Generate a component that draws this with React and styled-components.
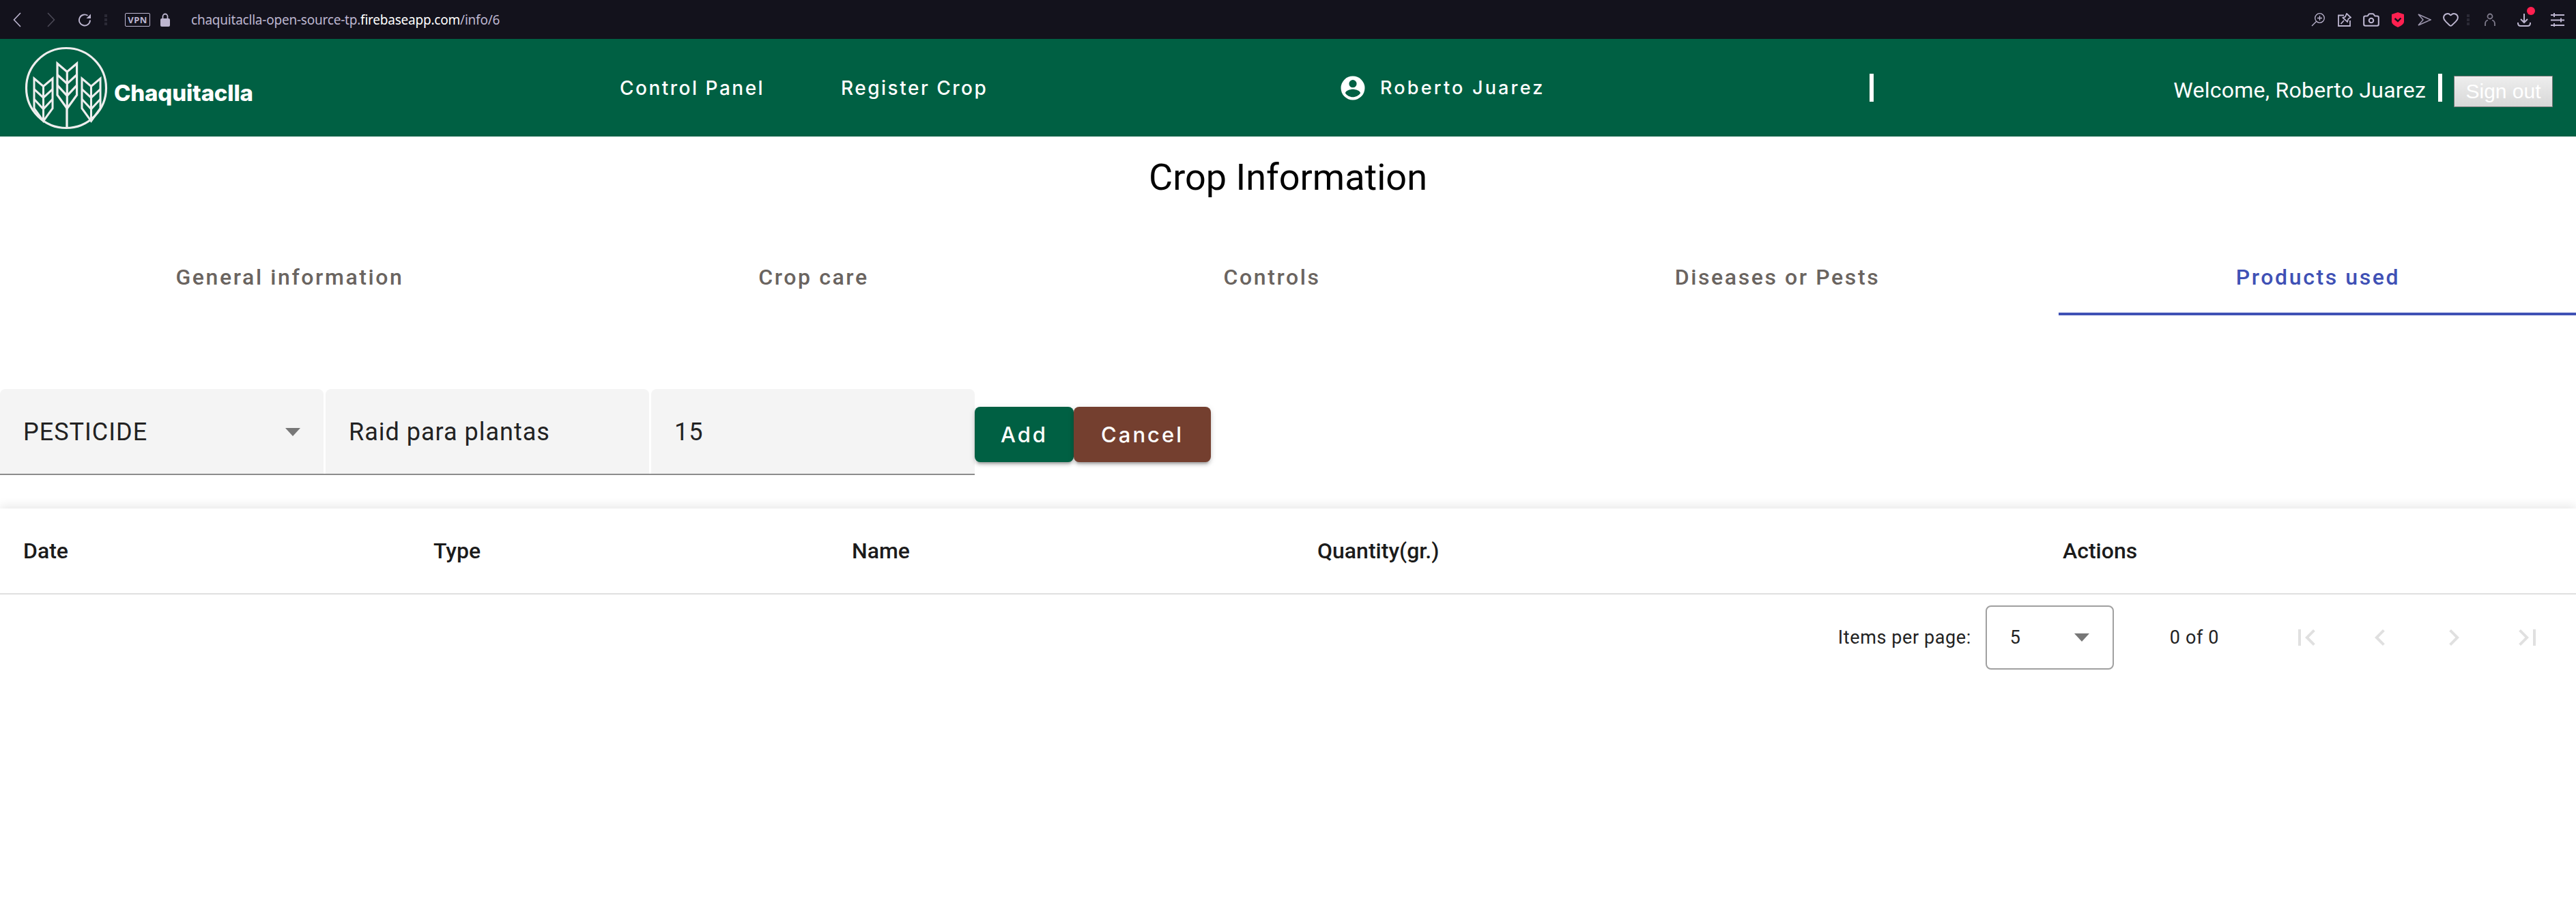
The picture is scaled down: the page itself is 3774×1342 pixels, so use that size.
import React from 'react';
import styled, { createGlobalStyle } from 'styled-components';
import { Camera, Heart } from 'lucide-react';

const GREEN = '#006043';
const BAR_TEXT = '#bdb6d0';

const Global = createGlobalStyle`
  html, body { margin: 0; padding: 0; background: #fff; }
  body { font-family: Roboto, "Liberation Sans", sans-serif; width: 3774px; height: 1342px; overflow: hidden; }
`;

const BrowserBar = styled.div`
  height: 57px;
  background: #13121c;
  display: flex;
  align-items: center;
  padding-left: 19px;
  color: ${BAR_TEXT};
`;

const Slot = styled.div`
  display: flex;
  margin-left: ${(p) => p.$ml || 0}px;
`;

const Dots = styled.div`
  width: 4px;
  height: 16px;
  margin-left: ${(p) => p.$ml || 0}px;
  background: repeating-linear-gradient(#2b2a36 0 4px, transparent 4px 6px);
`;

const Vpn = styled.span`
  width: 37px;
  height: 20px;
  margin-left: 26px;
  box-sizing: border-box;
  border: 1px solid ${BAR_TEXT};
  border-radius: 2px;
  display: flex;
  align-items: center;
  justify-content: center;
  font: 700 13px "Noto Sans", sans-serif;
  letter-spacing: 0.4px;
`;

const Url = styled.div`
  margin-left: 31px;
  font: 400 19px "Noto Sans", sans-serif;
  letter-spacing: -0.22px;
  color: ${BAR_TEXT};
  & b { color: #fff; font-weight: 400; }
`;

const BarIcons = styled.div`
  margin-left: auto;
  display: flex;
  align-items: center;
  padding-right: 1px;
`;

const IconCell = styled.div`
  width: ${(p) => p.$w || 39}px;
  display: flex;
  justify-content: center;
  position: relative;
`;

const Badge = styled.span`
  position: absolute;
  top: -9px;
  left: 27px;
  width: 12px;
  height: 12px;
  border-radius: 50%;
  background: #ff2050;
`;

const Header = styled.header`
  height: 143px;
  background: ${GREEN};
  display: flex;
  align-items: center;
  color: #fff;
  padding-left: 35px;
`;

const Brand = styled.div`
  display: flex;
  align-items: center;
  gap: 8px;
  width: 873px;
`;

const BrandName = styled.span`
  font: 800 33px Inter, "Noto Sans", sans-serif;
  letter-spacing: -0.2px;
  margin-top: 14px;
`;

const NavLink = styled.a`
  width: ${(p) => p.$w}px;
  font: 500 28px Inter, sans-serif;
  letter-spacing: 2.5px;
  color: #fff;
  white-space: nowrap;
`;

const UserBox = styled.div`
  display: flex;
  align-items: center;
  gap: 19px;
  width: 778px;
  font: 500 27px Inter, sans-serif;
  letter-spacing: 3.2px;
`;

const Divider = styled.div`
  width: 6px;
  height: 41px;
  background: #fff;
`;

const Right = styled.div`
  margin-left: auto;
  display: flex;
  align-items: center;
  padding-right: 34px;
`;

const Welcome = styled.span`
  font-size: 32px;
  letter-spacing: 0.25px;
  margin: 6px 18px 0 0;
  white-space: nowrap;
`;

const SignOut = styled.button`
  width: 145px;
  height: 46px;
  margin: 11px 0 0 17px;
  border: 1px solid #777;
  background: linear-gradient(#eee, #d8d8d8);
  color: #fff;
  font: 400 30px "Liberation Sans", sans-serif;
  padding: 0;
`;

const Title = styled.h1`
  margin: 0;
  font: 400 54px Roboto, sans-serif;
  text-align: center;
  line-height: 60px;
  padding-top: 30px;
  color: #000;
`;

const Tabs = styled.div`
  display: grid;
  grid-template-columns: 847px 688px 655px 826px 1fr;
  margin-top: 51px;
`;

const Tab = styled.div`
  display: flex;
  align-items: center;
  justify-content: center;
  font: 500 32px Roboto, sans-serif;
  letter-spacing: 2.6px;
  color: ${(p) => (p.$active ? '#3f51b5' : '#6a6460')};
  border-bottom: 4px solid ${(p) => (p.$active ? '#3f51b5' : 'transparent')};
  height: 121px;
  padding: 13px 0 0 2px;
  box-sizing: border-box;
`;

const FormRow = styled.div`
  display: flex;
  align-items: flex-start;
  margin-top: 108px;
`;

const FieldGroup = styled.div`
  display: flex;
  width: 1428px;
  gap: 3px;
  border-bottom: 2px solid #8c8c8c;
`;

const Field = styled.div`
  flex: 1;
  height: 124px;
  box-sizing: border-box;
  background: #f4f4f4;
  border-radius: 8px 8px 0 0;
  display: flex;
  align-items: center;
  justify-content: space-between;
  padding: 2px 34px 0;
  font-size: 36px;
  letter-spacing: 1px;
  color: #222;
`;

const Caret = styled.span`
  width: 0;
  height: 0;
  border-left: 11.5px solid transparent;
  border-right: 11.5px solid transparent;
  border-top: 12px solid #777;
`;

const Btn = styled.button`
  height: 81px;
  margin-top: 26px;
  padding: 0;
  width: ${(p) => p.$w}px;
  border: 0;
  border-radius: 8px;
  background: ${(p) => p.$bg};
  color: #fff;
  font: 500 31px Inter, sans-serif;
  letter-spacing: 3px;
  box-shadow: 0 6px 3px -4px rgba(0,0,0,.2), 0 4px 5px rgba(0,0,0,.14), 0 2px 10px rgba(0,0,0,.12);
`;

const Table = styled.div`
  margin-top: 49px;
  box-shadow: 0 -4px 14px rgba(0,0,0,.09);
  clip-path: inset(-30px 0 0 0);
`;

const HeadRow = styled.div`
  height: 126px;
  box-sizing: border-box;
  display: grid;
  grid-template-columns: 601px 613px 682px 1092px 1fr;
  align-items: center;
  padding-left: 34px;
  border-bottom: 2px solid #e0e0e0;
  font: 500 32px Roboto, sans-serif;
  color: #1b1b1b;
`;

const Paginator = styled.div`
  display: flex;
  align-items: center;
  justify-content: flex-end;
  padding: 16px 47px 16px 0;
  font-size: 27px;
  letter-spacing: 0.6px;
  color: #222;
`;

const PageSelect = styled.div`
  width: 188px;
  height: 94px;
  margin: 0 82px 0 21px;
  box-sizing: border-box;
  border: 2px solid #a0a0a0;
  border-radius: 8px;
  display: flex;
  align-items: center;
  justify-content: space-between;
  padding: 0 34px 0 34px;
`;

const PageButtons = styled.div`
  display: flex;
  gap: 60px;
  margin-left: 104px;
  color: #e0e0e0;
`;

const Wheat = ({ x, y, s = 1 }) => (
  <g transform={`translate(${x} ${y}) scale(${s})`} fill="none" stroke="#eee" strokeWidth="2.9">
    <path d="M0 0 L13 11 L26 0 L26 42 L13 60 L0 42 Z" />
    <path d="M0 15 L13 27 L26 15 M0 29 L13 43 L26 29 M13 11 V60" />
  </g>
);

const Logo = () => (
  <svg width="124" height="124" viewBox="0 0 124 124">
    <circle cx="62" cy="62" r="58.5" fill="none" stroke="#eee" strokeWidth="3.2" />
    <Wheat x={15} y={48} s={1.04} />
    <Wheat x={49} y={26} s={1.1} />
    <Wheat x={85} y={48} s={1.04} />
    <path d="M63 90 V120" stroke="#eee" strokeWidth="3.4" />
  </svg>
);

const Glyph = ({ w = 20, h = 20, sw = 1.8, color = 'currentColor', children }) => (
  <svg width={w} height={h} viewBox={`0 0 ${w} ${h}`} fill="none" stroke={color} strokeWidth={sw}>
    {children}
  </svg>
);

const AccountCircle = () => (
  <svg width="42" height="42" viewBox="0 0 24 24" fill="#fff">
    <path d="M12 2a10 10 0 1 0 0 20 10 10 0 0 0 0-20zm0 3.200a3.200 3.200 0 1 1 0 6.400 3.200 3.200 0 0 1 0-6.400zm0 14.400c-2.600 0-4.900-1.300-6.300-3.300 0-2.100 4.200-3.300 6.300-3.300s6.300 1.200 6.300 3.300c-1.400 2-3.700 3.300-6.300 3.300z" />
  </svg>
);

const PageIcon = ({ d }) => (
  <svg width="48" height="48" viewBox="0 0 24 24" fill="currentColor"><path d={d} /></svg>
);

export default function App() {
  return (
    <>
      <Global />
      <BrowserBar>
        <Glyph w={12} h={22} sw={1.6}><path d="M11 1 L1.500 11 L11 21" /></Glyph>
        <Slot $ml={38}>
          <Glyph w={12} h={22} sw={1.6} color="#4b4956"><path d="M1 1 L10.500 11 L1 21" /></Glyph>
        </Slot>
        <Slot $ml={33}>
          <Glyph sw={1.9}>
            <path d="M18 10.500 A8 8 0 1 1 14.500 3.800" />
            <path d="M19 1.500 V8 H12.500 Z" fill="currentColor" stroke="none" />
          </Glyph>
        </Slot>
        <Dots $ml={19} />
        <Vpn>VPN</Vpn>
        <Slot $ml={15}>
          <svg width="14" height="20" viewBox="0 0 14 20">
            <path d="M3.500 9 V5 a3.500 3.500 0 0 1 7 0 V9" fill="none" stroke={BAR_TEXT} strokeWidth="1.800" />
            <rect y="8" width="14" height="12" rx="2" fill={BAR_TEXT} />
          </svg>
        </Slot>
        <Url>chaquitaclla-open-source-tp.<b>firebaseapp.com</b>/info/6</Url>
        <BarIcons>
          <IconCell>
            <Glyph sw={1.3}>
              <circle cx="12.500" cy="7.500" r="6.800" />
              <path d="M12.500 4 V11 M9 7.500 H16 M7.500 12.500 L1 19" />
            </Glyph>
          </IconCell>
          <IconCell>
            <Glyph>
              <path d="M9 3.500 H1 V19 H18 V11" />
              <path d="M13 1 L19 6.500 L15.500 8.500 L14 13 L7.500 7 L11 5.500 Z M9 11 L4.500 16" />
            </Glyph>
          </IconCell>
          <IconCell><Camera size={26} strokeWidth={1.9} /></IconCell>
          <IconCell>
            <svg width="18" height="22" viewBox="0 0 18 22">
              <path d="M0 3 L9 0 L18 3 V14 Q18 18 9 22 Q0 18 0 14 Z" fill="#ff2050" />
              <path d="M4.500 9 L9 13 L13.500 8.500" stroke="#13121c" strokeWidth="2.400" fill="none" />
            </svg>
          </IconCell>
          <IconCell>
            <Glyph h={18} sw={1.5} color="#9c96ad"><path d="M1 1 L19 9 L1 17 L8 9 Z" /></Glyph>
          </IconCell>
          <IconCell><Heart size={25} strokeWidth={1.9} /></IconCell>
          <IconCell $w={11}><Dots /></IconCell>
          <IconCell $w={54}>
            <Glyph w={16} sw={1.8} color="#7f7b8c">
              <circle cx="8" cy="5" r="3.500" />
              <path d="M1 19 V16 Q1 11.500 5 10.500 M15 19 V16 Q15 11.500 11 10.500" />
            </Glyph>
          </IconCell>
          <IconCell $w={45}>
            <Glyph sw={2}>
              <path d="M10 1 V14 M5 9 L10 14 L15 9 M1 14 V15 Q1 19 5 19 H15 Q19 19 19 15 V14" />
            </Glyph>
            <Badge />
          </IconCell>
          <IconCell $w={53}>
            <Glyph sw={1.9}>
              <path d="M0 3 H20 M0 10.500 H20 M0 18 H20 M5 0 V6 M15 7.500 V13.500 M5 15 V20" />
            </Glyph>
          </IconCell>
        </BarIcons>
      </BrowserBar>
      <Header>
        <Brand>
          <Logo />
          <BrandName>Chaquitaclla</BrandName>
        </Brand>
        <NavLink $w={324}>Control Panel</NavLink>
        <NavLink $w={729}>Register Crop</NavLink>
        <UserBox>
          <AccountCircle />
          Roberto Juarez
        </UserBox>
        <Divider />
        <Right>
          <Welcome>Welcome, Roberto Juarez</Welcome>
          <Divider />
          <SignOut>Sign out</SignOut>
        </Right>
      </Header>
      <Title>Crop Information</Title>
      <Tabs>
        <Tab>General information</Tab>
        <Tab>Crop care</Tab>
        <Tab>Controls</Tab>
        <Tab>Diseases or Pests</Tab>
        <Tab $active>Products used</Tab>
      </Tabs>
      <FormRow>
        <FieldGroup>
          <Field>PESTICIDE<Caret /></Field>
          <Field>Raid para plantas</Field>
          <Field>15</Field>
        </FieldGroup>
        <Btn $w={145} $bg={GREEN}>Add</Btn>
        <Btn $w={201} $bg="#743f2f">Cancel</Btn>
      </FormRow>
      <Table>
        <HeadRow>
          <span>Date</span>
          <span>Type</span>
          <span>Name</span>
          <span>Quantity(gr.)</span>
          <span>Actions</span>
        </HeadRow>
        <Paginator>
          <span>Items per page:</span>
          <PageSelect>5<Caret /></PageSelect>
          <span>0 of 0</span>
          <PageButtons>
            <PageIcon d="M18.410 16.590 13.820 12l4.590-4.590L17 6l-6 6 6 6zM6 6h2v12H6z" />
            <PageIcon d="M15.410 7.410 14 6l-6 6 6 6 1.410-1.410L10.830 12z" />
            <PageIcon d="M10 6 8.590 7.410 13.170 12l-4.580 4.590L10 18l6-6z" />
            <PageIcon d="M5.590 7.410 10.180 12l-4.590 4.590L7 18l6-6-6-6zM16 6h2v12h-2z" />
          </PageButtons>
        </Paginator>
      </Table>
    </>
  );
}
